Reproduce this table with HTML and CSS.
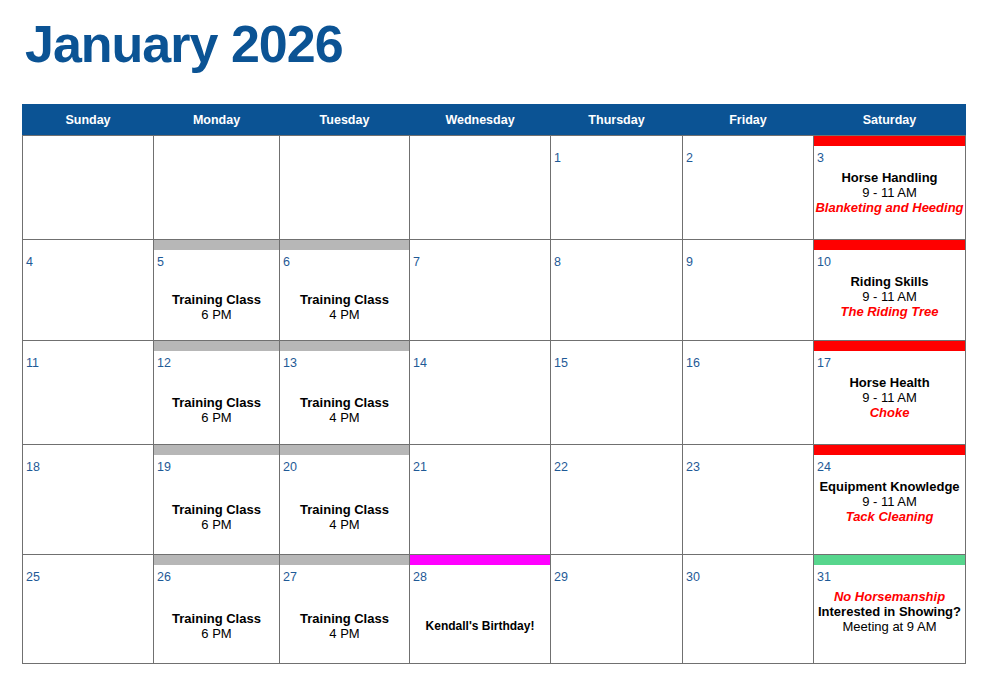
FILE: index.html
```html
<!DOCTYPE html>
<html lang="en">
<head>
<meta charset="utf-8">
<title>January 2026</title>
<link rel="stylesheet" href="styles.css">
</head>
<body>
<main class="page">
  <h1 class="title">January 2026</h1>
  <section class="calendar">
    <div class="weekdays">
      <div class="wd">Sunday</div>
      <div class="wd">Monday</div>
      <div class="wd">Tuesday</div>
      <div class="wd">Wednesday</div>
      <div class="wd">Thursday</div>
      <div class="wd">Friday</div>
      <div class="wd">Saturday</div>
    </div>
    <div class="grid">
      <!-- week 1 -->
      <div class="cell r1"><div class="bar"></div></div>
      <div class="cell r1"><div class="bar"></div></div>
      <div class="cell r1"><div class="bar"></div></div>
      <div class="cell r1"><div class="bar"></div></div>
      <div class="cell r1"><div class="bar"></div><div class="num">1</div></div>
      <div class="cell r1"><div class="bar"></div><div class="num">2</div></div>
      <div class="cell r1"><div class="bar red"></div><div class="num">3</div>
        <div class="ev top"><b>Horse Handling</b><span>9 - 11 AM</span><i>Blanketing and Heeding</i></div></div>
      <!-- week 2 -->
      <div class="cell r2"><div class="bar"></div><div class="num">4</div></div>
      <div class="cell r2"><div class="bar grey"></div><div class="num">5</div>
        <div class="ev mid"><b>Training Class</b><span>6 PM</span></div></div>
      <div class="cell r2"><div class="bar grey"></div><div class="num">6</div>
        <div class="ev mid"><b>Training Class</b><span>4 PM</span></div></div>
      <div class="cell r2"><div class="bar"></div><div class="num">7</div></div>
      <div class="cell r2"><div class="bar"></div><div class="num">8</div></div>
      <div class="cell r2"><div class="bar"></div><div class="num">9</div></div>
      <div class="cell r2"><div class="bar red"></div><div class="num">10</div>
        <div class="ev top"><b>Riding Skills</b><span>9 - 11 AM</span><i>The Riding Tree</i></div></div>
      <!-- week 3 -->
      <div class="cell r3"><div class="bar"></div><div class="num">11</div></div>
      <div class="cell r3"><div class="bar grey"></div><div class="num">12</div>
        <div class="ev mid"><b>Training Class</b><span>6 PM</span></div></div>
      <div class="cell r3"><div class="bar grey"></div><div class="num">13</div>
        <div class="ev mid"><b>Training Class</b><span>4 PM</span></div></div>
      <div class="cell r3"><div class="bar"></div><div class="num">14</div></div>
      <div class="cell r3"><div class="bar"></div><div class="num">15</div></div>
      <div class="cell r3"><div class="bar"></div><div class="num">16</div></div>
      <div class="cell r3"><div class="bar red"></div><div class="num">17</div>
        <div class="ev top"><b>Horse Health</b><span>9 - 11 AM</span><i>Choke</i></div></div>
      <!-- week 4 -->
      <div class="cell r4"><div class="bar"></div><div class="num">18</div></div>
      <div class="cell r4"><div class="bar grey"></div><div class="num">19</div>
        <div class="ev mid"><b>Training Class</b><span>6 PM</span></div></div>
      <div class="cell r4"><div class="bar grey"></div><div class="num">20</div>
        <div class="ev mid"><b>Training Class</b><span>4 PM</span></div></div>
      <div class="cell r4"><div class="bar"></div><div class="num">21</div></div>
      <div class="cell r4"><div class="bar"></div><div class="num">22</div></div>
      <div class="cell r4"><div class="bar"></div><div class="num">23</div></div>
      <div class="cell r4"><div class="bar red"></div><div class="num">24</div>
        <div class="ev top"><b>Equipment Knowledge</b><span>9 - 11 AM</span><i>Tack Cleaning</i></div></div>
      <!-- week 5 -->
      <div class="cell r5"><div class="bar"></div><div class="num">25</div></div>
      <div class="cell r5"><div class="bar grey"></div><div class="num">26</div>
        <div class="ev mid"><b>Training Class</b><span>6 PM</span></div></div>
      <div class="cell r5"><div class="bar grey"></div><div class="num">27</div>
        <div class="ev mid"><b>Training Class</b><span>4 PM</span></div></div>
      <div class="cell r5"><div class="bar magenta"></div><div class="num">28</div>
        <div class="ev mid"><b class="small">Kendall's Birthday!</b></div></div>
      <div class="cell r5"><div class="bar"></div><div class="num">29</div></div>
      <div class="cell r5"><div class="bar"></div><div class="num">30</div></div>
      <div class="cell r5"><div class="bar green"></div><div class="num">31</div>
        <div class="ev top"><i>No Horsemanship</i><b>Interested in Showing?</b><span>Meeting at 9 AM</span></div></div>
    </div>
  </section>
</main>
</body>
</html>
```

FILE: styles.css
```css
html, body {
  margin: 0;
  padding: 0;
  background: #ffffff;
}

body {
  font-family: "Liberation Sans", Arial, sans-serif;
  color: #000;
}

.page {
  padding: 14px 0 0 22px;
}

.title {
  margin: 0 0 30px 3px;
  font-size: 52px;
  line-height: 60px;
  font-weight: 700;
  letter-spacing: -1px;
  color: #0b5394;
}

.calendar {
  width: 944px;
}

.weekdays,
.grid {
  display: grid;
  grid-template-columns: 130px 125px 129px 140px 131px 130px 151px;
  column-gap: 1px;
}

.weekdays {
  height: 31px;
  padding: 2px 1px 0;
  box-sizing: border-box;
  background: #0b5394;
  align-items: center;
}

.wd {
  text-align: center;
  color: #ffffff;
  font-weight: 700;
  font-size: 12.5px;
  line-height: 15px;
}

.grid {
  row-gap: 1px;
  padding: 1px;
  background: #707070;
  grid-template-rows: 103px 100px 103px 109px 108px;
}

.cell {
  background: #ffffff;
  display: flex;
  flex-direction: column;
  min-width: 0;
}

.bar {
  height: 10px;
  flex: none;
}

.bar.red { background: #ff0000; }
.bar.grey { background: #b7b7b7; }
.bar.magenta { background: #ff00ff; }
.bar.green { background: #57d68d; }

.num {
  padding: 5px 0 0 3px;
  font-size: 12.5px;
  line-height: 15px;
  color: #1f5a96;
}

.ev {
  flex: 1;
  margin-top: 4px;
  display: flex;
  flex-direction: column;
  align-items: center;
  text-align: center;
  font-size: 13px;
  line-height: 15px;
  white-space: nowrap;
}

.ev.mid {
  justify-content: center;
}

.ev.top {
  justify-content: flex-start;
}

.ev b {
  font-weight: 700;
}

.ev b.small {
  font-size: 12px;
}

.ev i {
  font-style: italic;
  font-weight: 700;
  color: #ff0000;
}
```
